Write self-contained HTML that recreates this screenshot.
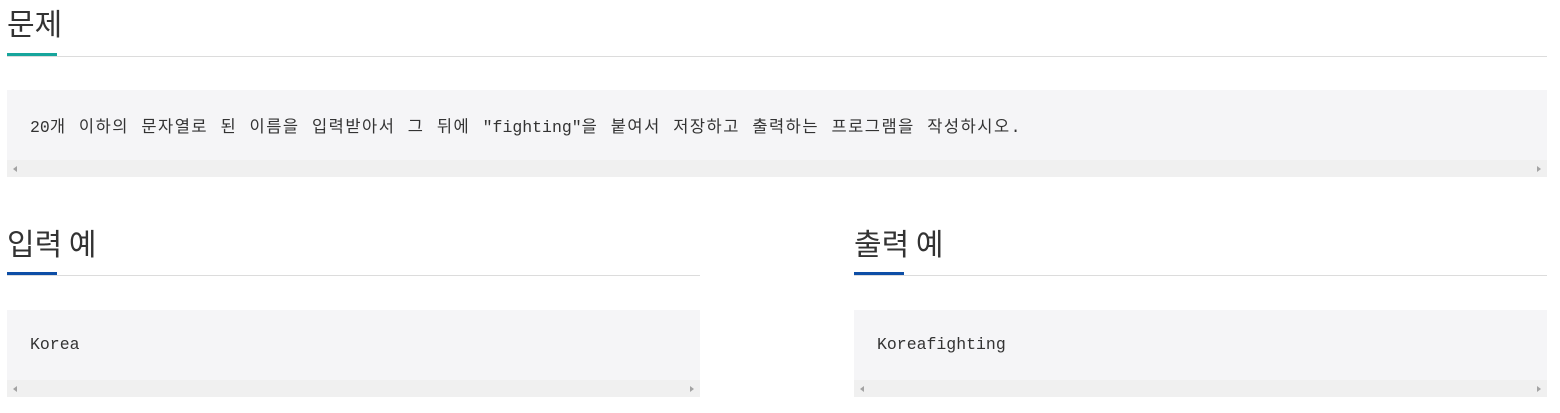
<!DOCTYPE html>
<html><head><meta charset="utf-8"><style>
*{margin:0;padding:0;box-sizing:border-box}
body{width:1560px;height:413px;background:#fff;position:relative;overflow:hidden;font-family:"Liberation Sans","Noto Sans CJK KR",sans-serif;color:#333}
.h{position:absolute;font-size:30px;line-height:36px;color:#333;font-family:"Noto Sans CJK KR",sans-serif;font-weight:400}
.line{position:absolute;height:1px;background:#dcdcdc}
.acc{position:absolute;height:3px;width:50px}
.box{position:absolute;background:#f5f5f7}
.box .t{position:absolute;left:23px;font-family:"Liberation Mono","Noto Sans CJK KR",monospace;font-size:16.5px;color:#333;white-space:pre}
.k{letter-spacing:1.5px}
.sb{position:absolute;left:0;right:0;bottom:0;height:17px;background:#f0f0f0}
.sb .l,.sb .r{position:absolute;top:6px;width:0;height:0;border-top:3px solid transparent;border-bottom:3px solid transparent}
.sb .l{left:6px;border-right:4px solid #a3a3a3}
.sb .r{right:6px;border-left:4px solid #a3a3a3}
</style></head><body>
<div class="h" style="left:7px;top:4px">문제</div>
<div class="line" style="left:7px;width:1540px;top:56px"></div>
<div class="acc" style="left:7px;top:53px;background:#17a59c"></div>
<div class="box" style="left:7px;top:90px;width:1540px;height:87px"><div class="t" style="top:23px;word-spacing:1px">20<span class="k">개 이하의 문자열로 된 이름을 입력받아서 그 뒤에 </span>"fighting"<span class="k">을 붙여서 저장하고 출력하는 프로그램을 작성하시오</span>.</div><div class="sb"><i class="l"></i><i class="r"></i></div></div>

<div class="h" style="left:7px;top:224px">입력 예</div>
<div class="line" style="left:7px;width:693px;top:275px"></div>
<div class="acc" style="left:7px;top:272px;background:#0d4ea6"></div>
<div class="box" style="left:7px;top:310px;width:693px;height:87px"><div class="t" style="top:25px">Korea</div><div class="sb"><i class="l"></i><i class="r"></i></div></div>

<div class="h" style="left:854px;top:224px">출력 예</div>
<div class="line" style="left:854px;width:693px;top:275px"></div>
<div class="acc" style="left:854px;top:272px;background:#0d4ea6"></div>
<div class="box" style="left:854px;top:310px;width:693px;height:87px"><div class="t" style="top:25px">Koreafighting</div><div class="sb"><i class="l"></i><i class="r"></i></div></div>
</body></html>
